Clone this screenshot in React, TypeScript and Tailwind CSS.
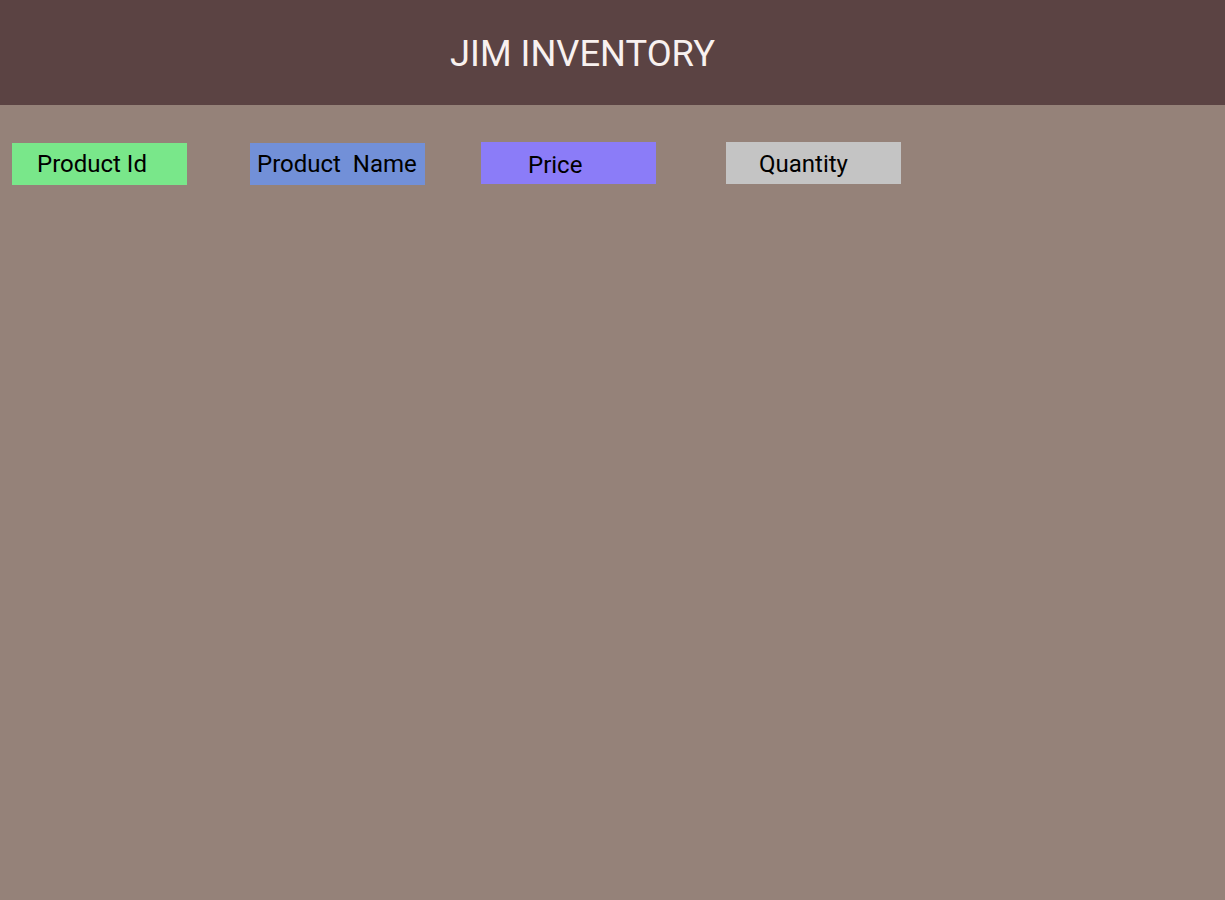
const columns = [
  { label: 'Product Id', bg: 'bg-[#79e78a]', box: 'ml-[12px] mt-[38px]', text: 'pl-[25px]' },
  { label: 'Product  Name', bg: 'bg-[#7290d8]', box: 'ml-[63px] mt-[38px]', text: 'pl-[7px]' },
  { label: 'Price', bg: 'bg-[#8b7cf8]', box: 'ml-[56px] mt-[37px]', text: 'pl-[47px] pt-[4px]' },
  { label: 'Quantity', bg: 'bg-[#c4c4c4]', box: 'ml-[70px] mt-[37px]', text: 'pl-[33px] pt-[2px]' },
];

const App = () => {
  return (
    <div className="min-h-[900px] w-full bg-[#958279] font-['Roboto',sans-serif]">
      <header className="h-[105px] bg-[#5b4343] flex items-center">
        <h1 className="ml-[450px] pt-[4px] text-[36.3px] leading-none text-[#f8f1ef] font-normal">JIM INVENTORY</h1>
      </header>
      <div className="flex items-start">
        {columns.map(col => (
          <div key={col.label} className={`${col.box} ${col.bg} w-[175px] h-[42px] flex items-center`}>
            <span className={`${col.text} text-[24px] leading-none text-black whitespace-pre`}>{col.label}</span>
          </div>
        ))}
      </div>
    </div>
  );
};

export default App;
